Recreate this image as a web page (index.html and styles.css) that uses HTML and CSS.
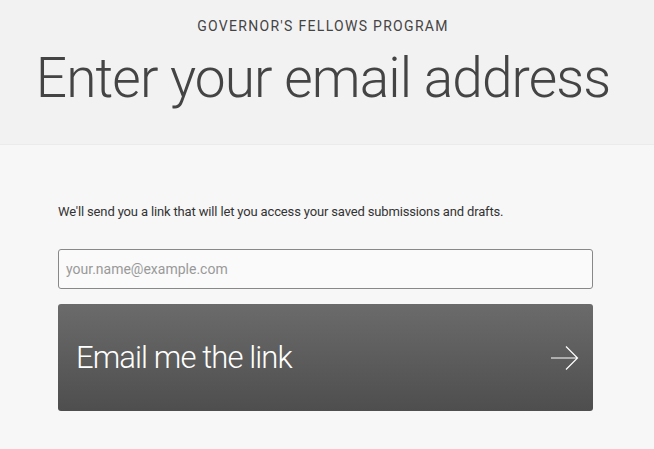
FILE: index.html
```html
<!DOCTYPE html>
<html lang="en">
	<head>
		<meta charset="UTF-8">
		<title>Enter your email address</title>
		<link rel="stylesheet" href="styles.css">
	</head>
	<body>
		<header class="masthead">
			<p class="program">GOVERNOR'S FELLOWS PROGRAM</p>
			<h1 class="title">Enter your email address</h1>
		</header>
		<main class="content">
			<p class="intro">We'll send you a link that will let you access your saved submissions and drafts.</p>
			<form class="email-form" onsubmit="return false;">
				<input type="email" class="email-input" placeholder="your.name@example.com">
				<button type="submit" class="send-btn">
					<span>Email me the link</span>
					<svg class="arrow" width="29" height="24" viewBox="0 0 29 24" fill="none" stroke="#fff" stroke-width="1.2">
						<path d="M1 12H27.5M16 0.5L27.5 12L16 23.5"/>
					</svg>
				</button>
			</form>
		</main>
	</body>
</html>
```
FILE: styles.css
```css
body {
	margin: 0;
	background: #f7f7f7;
	font-family: Roboto, "Liberation Sans", sans-serif;
	color: #333;
}
.masthead {
	background: #f2f2f2;
	border-bottom: 1px solid #ebebeb;
	height: 145px;
	text-align: center;
	padding: 18px 8px 0 0;
	box-sizing: border-box;
}
.program {
	margin: 0;
	font-size: 14px;
	letter-spacing: 1.3px;
	color: #444;
	line-height: 16px;
}
.title {
	margin: 12px 0 0;
	font-size: 55px;
	font-weight: 300;
	letter-spacing: -0.9px;
	color: #444;
	line-height: 64px;
}
.content {
	width: 535px;
	margin: 0 0 0 58px;
	padding-top: 58px;
}
.intro {
	margin: 0 0 28px;
	font-size: 13px;
	letter-spacing: -0.15px;
	line-height: 18px;
	color: #333;
}
.email-input {
	display: block;
	width: 100%;
	height: 40px;
	box-sizing: border-box;
	border: 1px solid #888;
	border-radius: 3px;
	background: #fafafa;
	padding: 0 7px;
	font-family: Roboto, "Liberation Sans", sans-serif;
	font-size: 14px;
	color: #333;
}
.email-input::placeholder {
	color: #999;
}
.send-btn {
	display: flex;
	align-items: center;
	justify-content: space-between;
	width: 100%;
	height: 107px;
	margin-top: 15px;
	padding: 0 14px 0 18px;
	border: 0;
	border-radius: 3px;
	background: linear-gradient(#6b6b6b, #4e4e4e);
	color: #fff;
	font-family: Roboto, "Liberation Sans", sans-serif;
	font-size: 31px;
	font-weight: 300;
	letter-spacing: -0.9px;
	cursor: pointer;
}
```
